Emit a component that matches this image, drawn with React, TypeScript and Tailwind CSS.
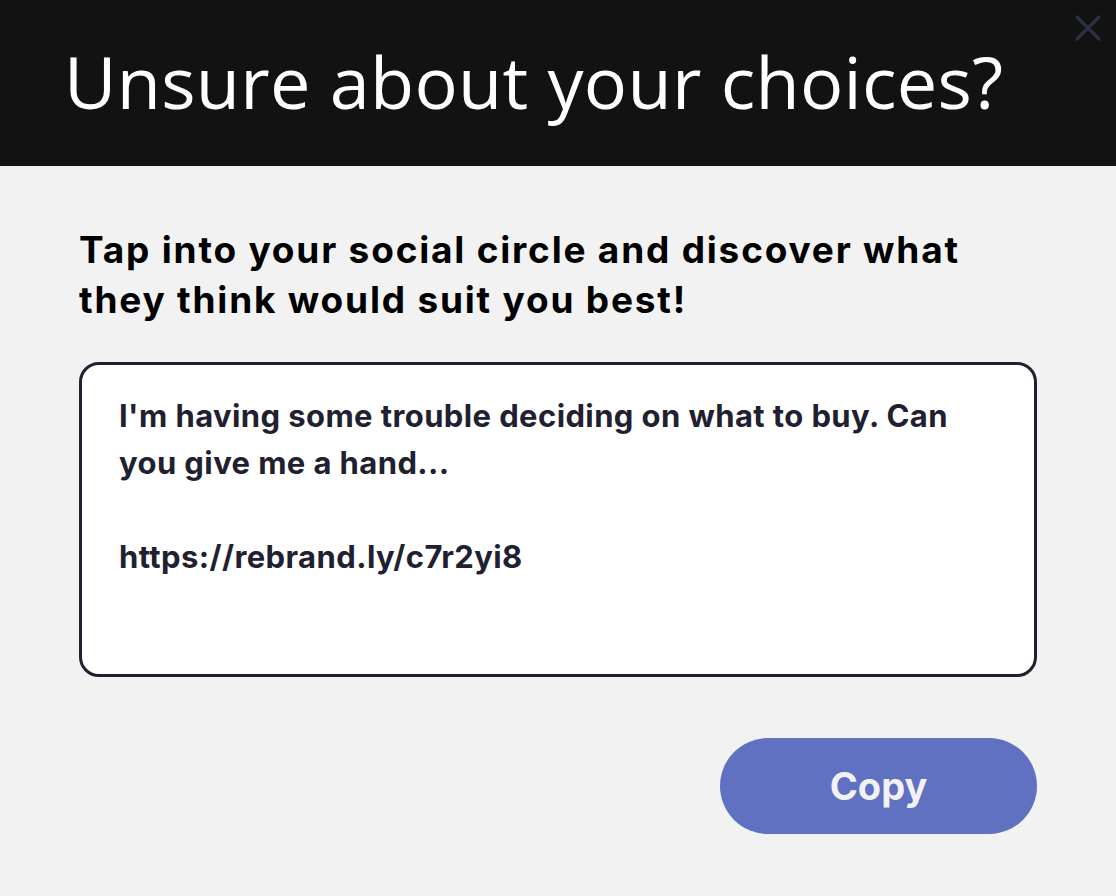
import React from 'react';

const message = `I'm having some trouble deciding on what to buy. Can you give me a hand...

https://rebrand.ly/c7r2yi8`;

export default function App() {
  return (
    <div className="w-[1116px] h-[896px] flex flex-col bg-[#f2f2f2] overflow-hidden">
      <header className="relative h-[166px] shrink-0 bg-[#121212] flex items-center pl-[64px]">
        <h1 className="text-white text-[72px] leading-none font-normal tracking-[0.3px] pb-[4px]" style={{ fontFamily: '"Open Sans", "Noto Sans", sans-serif' }}>
          Unsure about your choices?
        </h1>
        <button className="absolute top-[12px] right-[12px] w-[32px] h-[32px] flex items-center justify-center text-[#2b3140]" aria-label="Close">
          <svg width="30" height="30" viewBox="0 0 30 30" fill="none" stroke="currentColor" strokeWidth="3.2" strokeLinecap="round">
            <path d="M4 4 L26 26 M26 4 L4 26" />
          </svg>
        </button>
      </header>

      <main className="flex-1 flex flex-col px-[79px] pt-[59px]" style={{ fontFamily: 'Inter, "Liberation Sans", sans-serif' }}>
        <p className="max-w-[930px] text-black text-[37px] leading-[50px] font-bold tracking-[1.8px]">
          Tap into your social circle and discover what they think would suit you best!
        </p>

        <div className="mt-[37px] h-[315px] bg-white border-[3px] border-[#1e2130] rounded-[20px] pl-[37px] pr-[40px] pt-[27px]">
          <p className="whitespace-pre-wrap text-[#1f2130] text-[31px] leading-[47px] font-bold tracking-[0.4px]">
            {message}
          </p>
        </div>

        <div className="flex justify-end mt-[61px]">
          <button className="w-[317px] h-[96px] rounded-full bg-[#6071c1] text-[#f2f2f2] text-[38px] font-bold">
            Copy
          </button>
        </div>
      </main>
    </div>
  );
}
